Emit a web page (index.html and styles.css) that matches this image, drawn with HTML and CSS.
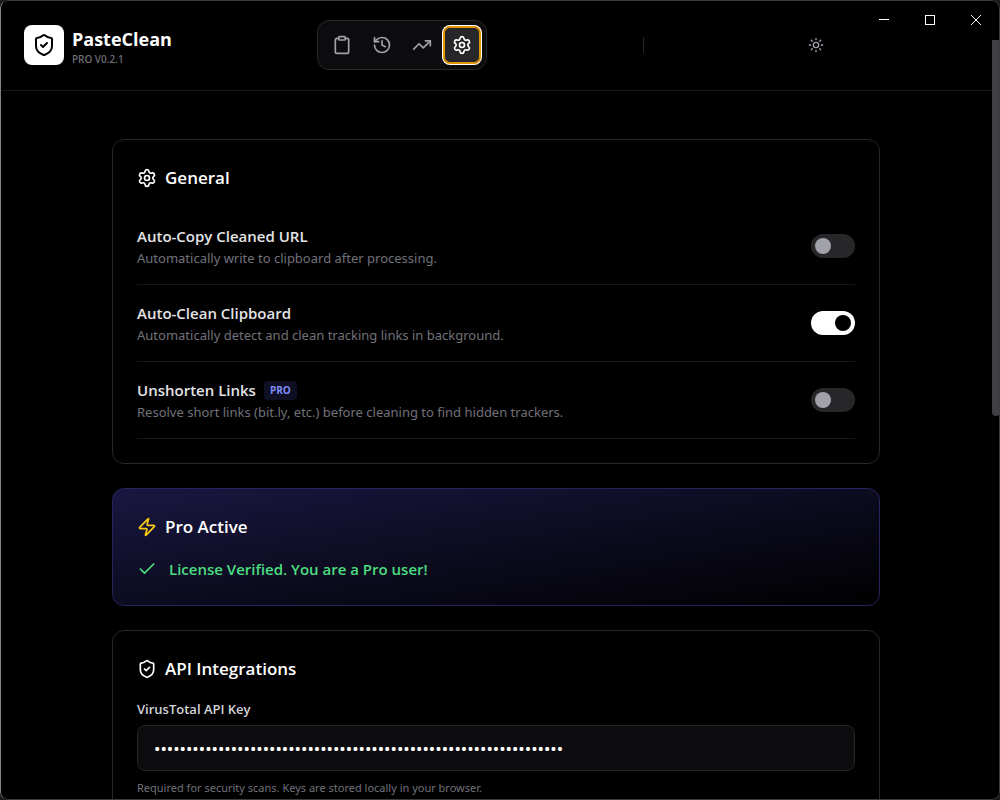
FILE: index.html
```html
<!DOCTYPE html>
<html lang="en">
<head>
  <meta charset="UTF-8" />
  <meta name="viewport" content="width=device-width, initial-scale=1.0" />
  <title>PasteClean</title>
  <link rel="stylesheet" href="styles.css">
</head>
<body>

<div class="window">
  <!-- Window controls -->
  <div class="window-controls">
    <button type="button" aria-label="Minimize">
      <svg width="10" height="10" viewBox="0 0 10 10" shape-rendering="crispEdges"><path d="M0 4.5h10"/></svg>
    </button>
    <button type="button" aria-label="Maximize">
      <svg width="10" height="10" viewBox="0 0 10 10" shape-rendering="crispEdges"><path d="M.5 .5h9v9h-9z"/></svg>
    </button>
    <button type="button" aria-label="Close">
      <svg width="10" height="10" viewBox="0 0 10 10"><path d="M0 0l10 10M10 0L0 10"/></svg>
    </button>
  </div>

  <header class="header">
    <div class="brand">
      <div class="logo">
        <svg class="icon" width="24" height="24" viewBox="0 0 24 24"><path d="M20 13c0 5-3.500 7.500-7.660 8.950a1 1 0 0 1-.67-.01C7.500 20.500 4 18 4 13V6a1 1 0 0 1 1-1c2 0 4.500-1.200 6.240-2.720a1.170 1.170 0 0 1 1.520 0C14.510 3.810 17 5 19 5a1 1 0 0 1 1 1z"/><path d="m9 12 2 2 4-4"/></svg>
      </div>
      <div class="brand-text">
        <h1>PasteClean</h1>
        <span>PRO V0.2.1</span>
      </div>
    </div>

    <nav class="tabs">
      <button type="button" aria-label="Clean">
        <svg class="icon" width="20" height="20" viewBox="0 0 24 24"><rect width="8" height="4" x="8" y="2" rx="1"/><path d="M16 4h2a2 2 0 0 1 2 2v14a2 2 0 0 1-2 2H6a2 2 0 0 1-2-2V6a2 2 0 0 1 2-2h2"/></svg>
      </button>
      <button type="button" aria-label="History">
        <svg class="icon" width="20" height="20" viewBox="0 0 24 24"><path d="M3 12a9 9 0 1 0 9-9 9.750 9.750 0 0 0-6.740 2.740L3 8"/><path d="M3 3v5h5"/><path d="M12 7v5l4 2"/></svg>
      </button>
      <button type="button" aria-label="Stats">
        <svg class="icon" width="20" height="20" viewBox="0 0 24 24"><path d="M16 7h6v6"/><path d="m22 7-8.500 8.500-5-5L2 17"/></svg>
      </button>
      <button type="button" class="active" aria-label="Settings">
        <svg class="icon" width="20" height="20" viewBox="0 0 24 24"><path d="M9.671 4.136a2.340 2.340 0 0 1 4.659 0 2.340 2.340 0 0 0 3.319 1.915 2.340 2.340 0 0 1 2.330 4.033 2.340 2.340 0 0 0 0 3.831 2.340 2.340 0 0 1-2.330 4.033 2.340 2.340 0 0 0-3.319 1.915 2.340 2.340 0 0 1-4.659 0 2.340 2.340 0 0 0-3.320-1.915 2.340 2.340 0 0 1-2.330-4.033 2.340 2.340 0 0 0 0-3.831A2.340 2.340 0 0 1 6.350 6.051a2.340 2.340 0 0 0 3.319-1.915"/><circle cx="12" cy="12" r="3"/></svg>
      </button>
    </nav>

    <div class="divider"></div>

    <button type="button" class="theme-btn" aria-label="Toggle theme">
      <svg class="icon" width="16" height="16" viewBox="0 0 24 24"><circle cx="12" cy="12" r="4"/><path d="M12 2v2M12 20v2M4.930 4.930l1.410 1.410M17.660 17.660l1.410 1.410M2 12h2M20 12h2M6.340 17.660l-1.410 1.410M19.070 4.930l-1.410 1.410"/></svg>
    </button>
  </header>

  <main class="content">
    <!-- General -->
    <section class="card">
      <h2>
        <svg class="icon" width="20" height="20" viewBox="0 0 24 24"><path d="M9.671 4.136a2.340 2.340 0 0 1 4.659 0 2.340 2.340 0 0 0 3.319 1.915 2.340 2.340 0 0 1 2.330 4.033 2.340 2.340 0 0 0 0 3.831 2.340 2.340 0 0 1-2.330 4.033 2.340 2.340 0 0 0-3.319 1.915 2.340 2.340 0 0 1-4.659 0 2.340 2.340 0 0 0-3.320-1.915 2.340 2.340 0 0 1-2.330-4.033 2.340 2.340 0 0 0 0-3.831A2.340 2.340 0 0 1 6.350 6.051a2.340 2.340 0 0 0 3.319-1.915"/><circle cx="12" cy="12" r="3"/></svg>
        General
      </h2>
      <div class="setting">
        <div>
          <label for="auto-copy">Auto-Copy Cleaned URL</label>
          <p>Automatically write to clipboard after processing.</p>
        </div>
        <input type="checkbox" class="toggle" id="auto-copy">
      </div>
      <div class="setting">
        <div>
          <label for="auto-clean">Auto-Clean Clipboard</label>
          <p>Automatically detect and clean tracking links in background.</p>
        </div>
        <input type="checkbox" class="toggle" id="auto-clean" checked>
      </div>
      <div class="setting">
        <div>
          <label for="unshorten">Unshorten Links <span class="badge">PRO</span></label>
          <p>Resolve short links (bit.ly, etc.) before cleaning to find hidden trackers.</p>
        </div>
        <input type="checkbox" class="toggle" id="unshorten">
      </div>
    </section>

    <!-- License -->
    <section class="card card-pro">
      <h2>
        <svg class="icon bolt" width="20" height="20" viewBox="0 0 24 24"><path d="M4 14a1 1 0 0 1-.78-1.630l9.900-10.200a.5.5 0 0 1 .86.46l-1.920 6.020A1 1 0 0 0 13 10h7a1 1 0 0 1 .78 1.630l-9.900 10.200a.5.5 0 0 1-.86-.46l1.920-6.020A1 1 0 0 0 11 14z"/></svg>
        Pro Active
      </h2>
      <div class="license">
        <svg class="icon" width="20" height="20" viewBox="0 0 24 24"><path d="M20 6 9 17l-5-5"/></svg>
        License Verified. You are a Pro user!
      </div>
    </section>

    <!-- API keys -->
    <section class="card">
      <h2>
        <svg class="icon" width="20" height="20" viewBox="0 0 24 24"><path d="M20 13c0 5-3.500 7.500-7.660 8.950a1 1 0 0 1-.67-.01C7.500 20.500 4 18 4 13V6a1 1 0 0 1 1-1c2 0 4.500-1.200 6.240-2.720a1.170 1.170 0 0 1 1.520 0C14.510 3.810 17 5 19 5a1 1 0 0 1 1 1z"/><path d="m9 12 2 2 4-4"/></svg>
        API Integrations
      </h2>
      <div class="field">
        <label for="vt-key">VirusTotal API Key</label>
        <input type="password" id="vt-key" value="0000000000000000000000000000000000000000000000000000000000000000">
        <p>Required for security scans. Keys are stored locally in your browser.</p>
      </div>
    </section>
  </main>

  <div class="scroll-thumb"></div>
</div>

</body>
</html>
```

FILE: styles.css
```css
* {
  box-sizing: border-box;
  margin: 0;
  padding: 0;
}
body {
  background: #1c1c1c;
  color: #fff;
  font-family: 'Segoe UI', 'Open Sans', 'Noto Sans', sans-serif;
  font-size: 14px;
}
button {
  border: none;
  background: none;
  color: inherit;
  font: inherit;
  cursor: pointer;
}
.window {
  position: relative;
  height: 100vh;
  overflow: hidden;
  background: #000;
  border-radius: 8px;
  padding-right: 8px;
}
/* window frame, drawn over the content */
.window::after {
  content: '';
  position: absolute;
  inset: 0;
  border: 1px solid #3c3c3c;
  border-left-color: #808080;
  border-radius: 8px;
  pointer-events: none;
}
.icon {
  display: block;
  flex-shrink: 0;
  fill: none;
  stroke: currentColor;
  stroke-width: 2;
  stroke-linecap: round;
  stroke-linejoin: round;
}

/* window controls */
.window-controls {
  position: absolute;
  top: 0;
  right: 1px;
  display: flex;
}
.window-controls button {
  width: 46px;
  height: 40px;
  display: flex;
  align-items: center;
  justify-content: center;
}
.window-controls svg {
  fill: none;
  stroke: #fff;
}

/* header */
.header {
  display: flex;
  align-items: center;
  justify-content: space-between;
  padding: 20px 160px 20px 24px;
  border-bottom: 1px solid #18181b;
}
.brand {
  display: flex;
  align-items: center;
  gap: 8px;
  width: 137px;
  white-space: nowrap;
}
.logo {
  width: 40px;
  height: 40px;
  flex-shrink: 0;
  display: flex;
  align-items: center;
  justify-content: center;
  background: #fff;
  color: #000;
  border-radius: 8px;
}
.brand h1 {
  font-size: 18px;
  line-height: 28px;
  font-weight: 700;
}
.brand span {
  display: block;
  font-family: 'Segoe UI', 'Noto Sans', sans-serif;
  font-size: 10px;
  line-height: 12px;
  font-weight: 500;
  color: #71717a;
}
.tabs {
  display: flex;
  gap: 4px;
  padding: 6px;
  background: #0c0c0e;
  border: 1px solid #27272a;
  border-radius: 12px;
}
.tabs button {
  width: 36px;
  height: 36px;
  display: flex;
  align-items: center;
  justify-content: center;
  border-radius: 6px;
  color: #a1a1aa;
}
.tabs .active {
  background: #27272a;
  color: #fff;
  box-shadow: inset 0 0 0 1px #e59700, 0 0 0 1px #e59700, 0 0 0 2px #fff;
}
.divider {
  width: 1px;
  height: 16px;
  background: #27272a;
}
.theme-btn {
  width: 32px;
  height: 32px;
  display: flex;
  align-items: center;
  justify-content: center;
  color: #a1a1aa;
}

/* settings */
.content {
  max-width: 816px;
  margin: 0 auto;
  padding: 48px 24px;
  display: flex;
  flex-direction: column;
  gap: 24px;
}
.card {
  padding: 24px;
  border: 1px solid #27272a;
  border-radius: 12px;
}
.card h2 {
  display: flex;
  align-items: center;
  gap: 8px;
  margin-bottom: 16px;
  font-size: 17px;
  line-height: 28px;
  font-weight: 600;
}
.card p {
  font-family: 'Segoe UI', 'Noto Sans', sans-serif;
  color: #71717a;
}
.setting {
  display: flex;
  align-items: center;
  justify-content: space-between;
  padding: 16px 0;
  border-bottom: 1px solid #18181b;
}
.setting label {
  display: flex;
  align-items: center;
  gap: 8px;
  font-size: 15px;
  line-height: 24px;
  font-weight: 600;
  color: #e4e4e7;
}
.setting p {
  font-size: 13px;
  line-height: 20px;
}
.badge {
  padding: 2px 6px;
  border-radius: 4px;
  background: rgba(99, 102, 241, 0.15);
  color: #818cf8;
  font-size: 10px;
  line-height: 15px;
  font-weight: 700;
}
.toggle {
  appearance: none;
  width: 44px;
  height: 24px;
  flex-shrink: 0;
  padding: 4px;
  display: flex;
  border-radius: 12px;
  background: #27272a;
  cursor: pointer;
}
.toggle::before {
  content: '';
  width: 16px;
  height: 16px;
  border-radius: 50%;
  background: #a1a1aa;
}
.toggle:checked {
  justify-content: flex-end;
  background: #fff;
}
.toggle:checked::before {
  background: #000;
}
.card-pro {
  background: linear-gradient(to bottom right, #191740, #000);
  border-color: #25245c;
}
.bolt {
  color: #facc15;
}
.license {
  display: flex;
  align-items: center;
  gap: 12px;
  font-size: 15px;
  line-height: 24px;
  font-weight: 600;
  color: #4ade80;
}
.field label {
  display: block;
  margin-bottom: 6px;
  font-size: 13px;
  line-height: 20px;
  font-weight: 600;
  color: #d4d4d8;
}
.field input {
  display: block;
  width: 100%;
  height: 46px;
  padding: 0 16px;
  background: #0c0c0e;
  border: 1px solid #27272a;
  border-radius: 8px;
  color: #fff;
  font-family: 'Noto Sans', sans-serif;
  font-size: 17px;
}
.field p {
  margin-top: 8px;
  font-size: 11px;
  line-height: 18px;
}

.scroll-thumb {
  position: absolute;
  top: 40px;
  right: 0;
  width: 8px;
  height: 47%;
  background: #3f3f46;
  border-radius: 0 0 4px 4px;
}
```
